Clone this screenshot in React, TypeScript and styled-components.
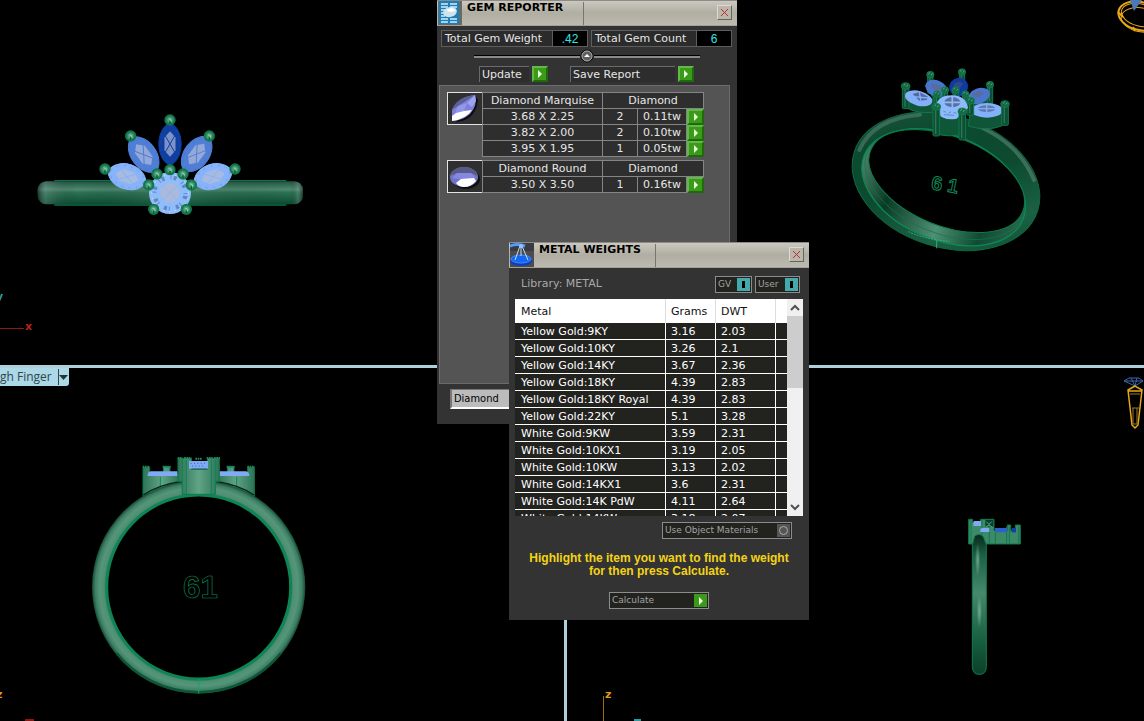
import React from "react";
import styled, { createGlobalStyle } from "styled-components";

const GlobalStyle = createGlobalStyle`
  * { box-sizing: border-box; }
  html, body, #root { height: 100%; }
  body {
    margin: 0;
    background: #000;
    overflow: hidden;
    font: 11px/15px "DejaVu Sans", Verdana, sans-serif;
    color: #e6e6e6;
  }
  button, select, input { font: inherit; margin: 0; }
`;

/* ---------- modelling viewports ---------- */

const Desktop = styled.main`
  position: relative;
  height: 100vh;
  overflow: hidden;
`;

const Viewports = styled.div`
  display: grid;
  height: 100%;
  grid-template-columns: 564fr 577fr;
  grid-template-rows: 365fr 353fr;
  gap: 3px;
  background: #add0dc;
`;

const Viewport = styled.section`
  position: relative;
  min-width: 0;
  min-height: 0;
  background: #000;
  overflow: hidden;
`;

const Scene = styled.svg`
  display: block;
  width: 100%;
  height: 100%;
`;

const ViewportTab = styled.button`
  position: absolute;
  top: 0;
  left: 0;
  display: flex;
  align-items: center;
  height: 18px;
  padding: 0;
  border: 0;
  border-radius: 0 0 3px 0;
  background: #add8e6;
  color: #2f4650;
  font: 12px/18px "Open Sans", "Noto Sans", sans-serif;
`;

const TabName = styled.span`
  width: 58px;
  text-align: left;
  white-space: nowrap;
`;

const TabArrow = styled.svg`
  width: 11px;
  height: 16px;
  border-left: 1px solid #2f4650;
`;

/* ---------- floating windows ---------- */

const Window = styled.section<{ $x: number; $y: number }>`
  position: absolute;
  left: ${(p) => p.$x}px;
  top: ${(p) => p.$y}px;
  width: 300px;
  background: #333;
`;

const TitleBar = styled.header`
  display: flex;
  height: 26px;
  padding: 1px 5px 1px 1px;
  border-top: 1px solid #8d8b85;
  border-bottom: 1px solid #a3a19b;
  background: linear-gradient(#cbc8bf 0, #b0ada2 12px, #bdbab0 24px);
`;

const TitleIcon = styled.svg`
  width: 24px;
  height: 24px;
  margin-top: -1px;
`;

const Title = styled.h1`
  width: 122px;
  height: 23px;
  margin: 0;
  padding-left: 5px;
  border-right: 1px solid #77756e;
  color: #000;
  font-size: 11px;
  line-height: 11px;
  font-weight: 700;
  white-space: nowrap;
`;

const CloseButton = styled.button`
  display: grid;
  place-items: center;
  width: 15px;
  height: 15px;
  margin: 3px 0 0 auto;
  padding: 0;
  border: 1px solid;
  border-color: #dcdad2 #66645e #66645e #dcdad2;
  background: #b9b6ac;
`;

const GreenButton = styled.button<{ $size?: number; $flat?: boolean }>`
  display: grid;
  place-items: center;
  width: ${(p) => p.$size ?? 17}px;
  height: ${(p) => p.$size ?? 16}px;
  padding: 0;
  border: ${(p) => (p.$flat ? 0 : 2)}px solid;
  border-color: #63b84a #1f6a0c #1f6a0c #63b84a;
  background: #3c9a1b;
`;

const Arrow = () => (
  <svg width="8" height="8" viewBox="0 0 8 8">
    <path d="M2 0 L6 4 L2 8 Z" fill="#e9ffd9" />
  </svg>
);

const Close = () => (
  <svg width="9" height="9" viewBox="0 0 9 9">
    <path d="M1 1 L8 8 M8 1 L1 8" stroke="#c22a2e" strokeWidth="1" />
  </svg>
);

/* ---------- gem reporter ---------- */

const Totals = styled.div`
  display: flex;
  gap: 3px;
  padding: 4px 4px 0;
`;

const Total = styled.div`
  display: flex;
  height: 17px;
  border: 1px solid #5d5d5d;
  background: #1f1f1f;
`;

const TotalLabel = styled.span<{ $w: number }>`
  width: ${(p) => p.$w}px;
  padding-left: 3px;
  white-space: nowrap;
  border-right: 1px solid #5d5d5d;
  background: #2b2b2b;
`;

const TotalValue = styled.output<{ $w: number }>`
  width: ${(p) => p.$w}px;
  background: #000;
  color: #35e0e6;
  text-align: center;
  font: 12px/16px "Liberation Sans", Arial, sans-serif;
`;

const Fold = styled.div`
  display: flex;
  align-items: center;
  height: 14px;
  margin: 2px 37px 0;
  &::before, &::after {
    content: "";
    flex: 1;
    height: 2px;
    border-top: 1px solid #000;
    background: #8a8a8a;
  }
`;

const FoldButton = styled.button`
  width: 14px;
  height: 14px;
  padding: 0;
  border: 0;
  background: none;
  svg { display: block; }
`;

const Actions = styled.div`
  display: flex;
  gap: 22px;
  padding: 3px 42px 0;
`;

const Action = styled.label<{ $w: number }>`
  display: flex;
  gap: 3px;
  > span {
    width: ${(p) => p.$w}px;
    height: 16px;
    padding-left: 2px;
    border-top: 1px solid #6a6a6a;
    border-left: 1px solid #6a6a6a;
    background: #2d2d2d;
  }
`;

const ReportPanel = styled.div`
  display: flex;
  flex-direction: column;
  gap: 3px;
  height: 299px;
  margin: 3px 7px 0 2px;
  padding: 6px 0 0 7px;
  border: 1px solid #6b6b6b;
  background: #545454;
`;

const GemGroup = styled.div`
  display: flex;
  align-items: flex-start;
`;

const GemPicture = styled.svg`
  width: 36px;
  height: 33px;
  border: 1px solid #e4e4e4;
  background: #2f2f2f;
`;

const GemTable = styled.table`
  width: 222px;
  table-layout: fixed;
  border-collapse: separate;
  border-spacing: 0;
  border-top: 1px solid #858585;
  margin-left: -1px;
  th, td {
    height: 16px;
    padding: 0;
    border-right: 1px solid #858585;
    border-bottom: 1px solid #858585;
    background: #2e2e2e;
    font-weight: 400;
    text-align: center;
    white-space: nowrap;
  }
  th:first-child, td:first-child { border-left: 1px solid #858585; }
  td:last-child { border: 0; }
`;

const MaterialBar = styled.div`
  padding: 5px 12px 15px 13px;
`;

const MaterialSelect = styled.select`
  display: block;
  width: 100%;
  height: 20px;
  padding: 0 2px;
  border: 1px solid;
  border-color: #777 #fff #fff #777;
  border-width: 1px 1px 2px 2px;
  border-radius: 0;
  appearance: none;
  background: #bcbcbc;
  color: #000;
  font: 11px/16px "DejaVu Sans Condensed", Tahoma, sans-serif;
`;

/* ---------- metal weights ---------- */

const Toolbar = styled.div`
  display: flex;
  gap: 3px;
  padding: 8px 9px 6px 12px;
`;

const Library = styled.span`
  flex: 1;
  color: #a8a8a8;
`;

const Toggle = styled.label<{ $w: number }>`
  display: flex;
  align-items: center;
  justify-content: space-between;
  width: ${(p) => p.$w}px;
  height: 17px;
  padding: 0 1px 0 2px;
  border: 1px solid #8c8c8c;
  background: #22221f;
  color: #a2a2a2;
  font-size: 9px;
  line-height: 17px;
  white-space: nowrap;
`;

const Tick = styled.input`
  display: grid;
  place-items: center;
  width: 13px;
  height: 13px;
  appearance: none;
  background: #555;
  &::before {
    content: "";
    width: 7px;
    height: 7px;
    border: 1px solid #aaa;
    border-radius: 50%;
  }
  &:checked { background: #43a9ab; }
  &:checked::before {
    width: 3px;
    height: 7px;
    border: 0;
    border-radius: 0;
    background: #000;
  }
`;

const MetalList = styled.div`
  display: flex;
  height: 217px;
  margin: 0 6px;
  overflow: hidden;
  background: #fff;
`;

const MetalRows = styled.div`
  flex: 1;
  overflow: hidden;
`;

const MetalTable = styled.table`
  width: 272px;
  table-layout: fixed;
  border-collapse: separate;
  border-spacing: 0;
  background: #22221f;
  color: #fff;
  th {
    height: 24px;
    padding: 0 0 0 5px;
    border-right: 1px solid #ddd;
    background: #fff;
    color: #111;
    font-weight: 400;
    text-align: left;
  }
  td {
    height: 17px;
    padding: 0 0 0 5px;
    border-right: 1px solid #fff;
    border-bottom: 1px solid #fff;
    white-space: nowrap;
  }
  th:first-child, td:first-child { padding-left: 6px; }
  th:last-child, td:last-child { border-right: 0; }
`;

const Scrollbar = styled.div`
  display: grid;
  grid-template-rows: 17px 72px 1fr 17px;
  justify-items: center;
  align-items: center;
  width: 16px;
  background: #f0f0f0;
`;

const Thumb = styled.div`
  align-self: stretch;
  justify-self: stretch;
  background: #cdcdcd;
`;

const Materials = styled.div`
  display: flex;
  justify-content: flex-end;
  padding: 6px 17px 0;
`;

const Hint = styled.p`
  margin: 13px 16px 14px;
  color: #f3d316;
  font: bold 12px/13px "Liberation Sans", Arial, sans-serif;
  text-align: center;
`;

const Calculate = styled.div`
  display: flex;
  justify-content: center;
  padding-bottom: 11px;
`;

/* ---------- data ---------- */

const gems = [
  {
    name: "Diamond Marquise",
    shape: "marquise",
    rows: [
      ["3.68 X 2.25", "2", "0.11tw"],
      ["3.82 X 2.00", "2", "0.10tw"],
      ["3.95 X 1.95", "1", "0.05tw"],
    ],
  },
  { name: "Diamond Round", shape: "round", rows: [["3.50 X 3.50", "1", "0.16tw"]] },
];

const metals = [
  ["Yellow Gold:9KY", "3.16", "2.03"],
  ["Yellow Gold:10KY", "3.26", "2.1"],
  ["Yellow Gold:14KY", "3.67", "2.36"],
  ["Yellow Gold:18KY", "4.39", "2.83"],
  ["Yellow Gold:18KY Royal", "4.39", "2.83"],
  ["Yellow Gold:22KY", "5.1", "3.28"],
  ["White Gold:9KW", "3.59", "2.31"],
  ["White Gold:10KX1", "3.19", "2.05"],
  ["White Gold:10KW", "3.13", "2.02"],
  ["White Gold:14KX1", "3.6", "2.31"],
  ["White Gold:14K PdW", "4.11", "2.64"],
  ["White Gold:14KW", "3.18", "2.07"],
];

/* ---------- drawings ---------- */

const axisFont = { fontFamily: "DejaVu Sans", fontSize: 11, fontWeight: 700 } as const;

type MarquiseProps = { x: number; y: number; l: number; w: number; r: number; fill: string; facet: string };

const Marquise = ({ x, y, l, w, r, fill, facet }: MarquiseProps) => (
  <g transform={`translate(${x} ${y}) rotate(${r})`}>
    <path
      d={`M${-l} 0 C${-l * 0.7} ${-w * 1.35} ${l * 0.7} ${-w * 1.35} ${l} 0 C${l * 0.7} ${w * 1.35} ${-l * 0.7} ${w * 1.35} ${-l} 0Z`}
      fill={fill}
      stroke={fill}
      strokeWidth="3"
      strokeLinejoin="round"
    />
    <ellipse rx={l * 0.85} ry={w * 0.85} fill="none" stroke="#3c5fa0" strokeWidth="1" strokeDasharray="8 14" opacity=".6" />
    <path d={`M${-l * 0.6} 0 L${-l * 0.3} ${-w * 0.5} H${l * 0.3} L${l * 0.6} 0 L${l * 0.3} ${w * 0.5} H${-l * 0.3}Z`} fill={facet} />
    <path
      d={`M${-l * 0.4} ${-w * 0.45} L${l * 0.4} ${w * 0.45} M${-l * 0.4} ${w * 0.45} L${l * 0.4} ${-w * 0.45}`}
      stroke={fill}
      strokeWidth="3"
    />
  </g>
);

const prongs = [
  [450, 60], [332, 108], [568, 108], [255, 207], [645, 207], [450, 209],
  [411, 222], [489, 222], [386, 255], [514, 255], [401, 328], [499, 328],
];

const TopView = () => (
  <Scene viewBox="0 0 564 365" preserveAspectRatio="xMidYMid slice" aria-hidden="true">
    <defs>
      <linearGradient id="band" x2="0" y2="1">
        <stop offset="0" stopColor="#24543f" />
        <stop offset=".35" stopColor="#4d8a72" />
        <stop offset=".5" stopColor="#2c6f52" />
        <stop offset=".75" stopColor="#1a5f42" />
        <stop offset="1" stopColor="#0d4a30" />
      </linearGradient>
      <linearGradient id="bandEnds">
        <stop offset="0" stopColor="#000" stopOpacity=".5" />
        <stop offset=".03" stopColor="#9aa" stopOpacity=".25" />
        <stop offset=".15" stopColor="#000" stopOpacity="0" />
        <stop offset=".5" stopColor="#5a9c83" stopOpacity=".25" />
        <stop offset=".95" stopColor="#000" stopOpacity="0" />
        <stop offset=".98" stopColor="#9aa" stopOpacity=".25" />
        <stop offset="1" stopColor="#000" stopOpacity=".5" />
      </linearGradient>
    </defs>
    <g transform="translate(20 100) scale(.33333)">
      <rect x="53" y="244" width="796" height="69" rx="26" fill="url(#band)" />
      <rect x="53" y="244" width="796" height="69" rx="26" fill="url(#bandEnds)" />
      <path d="M103 242 H799 M103 315 H799" stroke="#0a7048" strokeWidth="4" />
      <Marquise x={450} y={132} l={64} w={33} r={90} fill="#103fa3" facet="#7d92c6" />
      <Marquise x={371} y={164} l={64} w={37} r={54} fill="#4f7ed6" facet="#94a9d8" />
      <Marquise x={530} y={162} l={64} w={37} r={126} fill="#4f7ed6" facet="#94a9d8" />
      <Marquise x={321} y={230} l={60} w={37} r={17} fill="#86b3fa" facet="#a8badf" />
      <Marquise x={579} y={230} l={60} w={37} r={163} fill="#86b3fa" facet="#a8badf" />
      <circle cx="450" cy="279" r="63" fill="#8fbcfb" />
      <circle cx="450" cy="279" r="47" fill="none" stroke="#42669b" strokeWidth="13" strokeDasharray="3 6 9 19" opacity=".6" />
      <circle cx="450" cy="279" r="55" fill="none" stroke="#cfe2ff" strokeWidth="3" strokeDasharray="4 13" />
      <circle cx="450" cy="279" r="29" fill="#aab9dc" />
      <path d="M428 258 L472 300 M472 258 L428 300" stroke="#8fb2ee" strokeWidth="2" />
      {prongs.map(([x, y]) => (
        <g key={`${x}-${y}`} transform={`translate(${x} ${y})`}>
          <circle r="17" fill="#12774b" />
          <circle r="10" fill="#4f9e7c" stroke="#2a8a60" strokeWidth="3" />
          <path d="M-4 -3 Q5 -5 4 5" fill="none" stroke="#9fd0b8" strokeWidth="3" />
          <path d="M0 4 v8" stroke="#0b5a36" strokeWidth="4" />
        </g>
      ))}
    </g>
    <path d="M0 328.500 H24" stroke="#8e1712" />
    <text x="25" y="330" fill="#b9221c" {...axisFont}>x</text>
    <text x="-4" y="300" fill="#2b9da0" {...axisFont}>y</text>
  </Scene>
);

type PostProps = { x: number; y: number; h: number; w?: number };

const Post = ({ x, y, h, w = 20 }: PostProps) => (
  <g>
    <rect x={x - w / 2} y={y} width={w} height={h} rx="4" fill="#0f4f34" stroke="#0b7a4b" strokeWidth="3" />
    <path d={`M${x - 2} ${y + 14} V${y + h - 6}`} stroke="#2d7657" strokeWidth="4" />
    <ellipse cx={x} cy={y + 4} rx={w / 2 + 3} ry="10" fill="#146a45" stroke="#0d8a55" strokeWidth="2" />
    <path d={`M${x - 6} ${y + 2} l5 -4 M${x + 2} ${y + 5} l5 -4`} stroke="#63a888" strokeWidth="3" />
  </g>
);

const PerspectiveView = () => (
  <Scene viewBox="0 0 577 365" preserveAspectRatio="xMidYMid slice" aria-hidden="true">
    <defs>
      <linearGradient id="hoop" x1="0" y1="0" x2="1" y2="1">
        <stop offset="0" stopColor="#1d5a40" />
        <stop offset=".25" stopColor="#0d4a30" />
        <stop offset=".5" stopColor="#0c4b30" />
        <stop offset=".75" stopColor="#1b6144" />
        <stop offset="1" stopColor="#0a4a2d" />
      </linearGradient>
      <linearGradient id="hoopInner">
        <stop offset="0" stopColor="#4c806a" />
        <stop offset=".22" stopColor="#0a3a24" />
        <stop offset=".55" stopColor="#4f8f73" />
        <stop offset=".8" stopColor="#104a32" />
        <stop offset="1" stopColor="#2a654c" />
      </linearGradient>
    </defs>
    <g transform="translate(273 50) scale(.33333)">
      <ellipse cx="318" cy="394" rx="289" ry="197" transform="rotate(18 318 394)" fill="url(#hoop)" stroke="#0c6a42" strokeWidth="3" />
      <path d="M58 300 Q100 205 240 194" fill="none" stroke="#6d8e80" strokeWidth="12" strokeLinecap="round" opacity=".45" />
      <path d="M400 222 Q535 275 582 390" fill="none" stroke="#6d8e80" strokeWidth="12" strokeLinecap="round" opacity=".5" />
      <ellipse cx="311" cy="412" rx="257" ry="158" transform="rotate(22 311 412)" fill="url(#hoopInner)" stroke="#0b8a55" strokeWidth="4" />
      <ellipse cx="315" cy="403" rx="252" ry="147" transform="rotate(22 315 403)" fill="none" stroke="#0b7a4b" strokeWidth="2" />
      <ellipse cx="320" cy="393" rx="246" ry="134" transform="rotate(22 320 393)" fill="#000" stroke="#0b7a4b" strokeWidth="3" />
      <path d="M205 545 Q255 568 330 574" fill="none" stroke="#2fae7b" strokeWidth="3" strokeDasharray="6 3" />
      <path d="M290 570 V595" fill="none" stroke="#2fae7b" strokeWidth="3" />
      <g fill="#0f5537" stroke="#0b7a4b" strokeWidth="3">
        <path d="M200 135 L198 172 Q230 195 300 185 V150Z" />
        <path d="M392 180 L385 228 Q440 245 485 228 L490 180Z" />
        <path d="M255 105 Q300 150 400 150 L450 130 V155 L400 185 L290 160Z" />
      </g>
      <Post x={271} y={70} h={60} w={16} />
      <Post x={366} y={62} h={50} w={16} />
      <Post x={450} y={100} h={60} w={16} />
      <ellipse cx="289" cy="115" rx="34" ry="24" transform="rotate(22 289 115)" fill="#4a75cd" />
      <ellipse cx="356" cy="111" rx="29" ry="27" transform="rotate(-32 356 111)" fill="#0f3a9f" />
      <ellipse cx="417" cy="138" rx="34" ry="23" transform="rotate(-20 417 138)" fill="#4a75cd" />
      <path d="M272 100 l28 6 8 14 -16 5 -14 -10Z M396 132 l22 -10 14 6 -10 12 -18 2Z" fill="#596b9f" />
      <path d="M342 100 l18 -6 10 8 -12 14 -16 -2Z" fill="#30478a" />
      <Post x={197} y={104} h={72} />
      <ellipse cx="236" cy="145" rx="42" ry="22" transform="rotate(15 236 145)" fill="#82b1fa" />
      <path d="M218 132 l20 -6 26 14 -4 10 -22 2Z" fill="#53699d" />
      <path d="M238 126 l4 26 M220 140 l44 4" stroke="#82b1fa" strokeWidth="4" />
      <Post x={315} y={116} h={30} w={16} />
      <Post x={347} y={116} h={30} w={16} />
      <Post x={376} y={128} h={36} w={16} />
      <Post x={291} y={128} h={50} w={16} />
      <ellipse cx="441" cy="181" rx="48" ry="22" fill="#82b1fa" />
      <ellipse cx="440" cy="176" rx="26" ry="10" fill="#5f78ad" />
      <path d="M440 165 V188 M414 176 H466" stroke="#82b1fa" strokeWidth="4" />
      <Post x={495} y={158} h={68} />
      <Post x={391} y={148} h={48} />
      <path d="M293 185 L290 252 Q330 264 375 250 V190Z" fill="#0f5537" stroke="#0b7a4b" strokeWidth="3" />
      <path d="M288 170 Q292 136 335 136 Q378 136 384 174 L350 206 Q325 212 303 200Z" fill="#8cbafd" />
      <ellipse cx="337" cy="157" rx="24" ry="15" fill="#5a6f9f" />
      <path d="M337 140 V174 M312 157 H362" stroke="#8cbafd" strokeWidth="5" />
      <path d="M310 183 l8 4 M325 190 l8 -5 M340 188 l10 2 M312 194 l30 2" stroke="#6288c5" strokeWidth="3" />
      <Post x={289} y={166} h={92} w={20} />
      <Post x={367} y={180} h={90} w={20} />
      <g fill="none" stroke="#0d8a58" strokeWidth="3" fontFamily="Liberation Sans" fontSize="58" fontWeight="700">
        <text x="274" y="420" transform="rotate(8 290 405)">6</text>
        <text x="323" y="428" transform="rotate(12 340 410)">1</text>
      </g>
    </g>
    <g fill="none" stroke="#e9a718" strokeWidth="1">
      <ellipse cx="573" cy="16" rx="22" ry="14" transform="rotate(14 573 16)" strokeWidth="2" />
      <ellipse cx="573" cy="15" rx="19" ry="11" transform="rotate(14 573 15)" />
      <ellipse cx="575" cy="20" rx="21" ry="12" transform="rotate(10 575 20)" />
      <path d="M551 12 l5 5 M566 27 l2 4" strokeWidth="2" />
    </g>
    <path d="M563 0 L567 11 L575 0Z" fill="#4a78b8" />
  </Scene>
);

const FrontView = () => (
  <Scene viewBox="0 0 564 353" preserveAspectRatio="xMidYMid slice" aria-hidden="true">
    <defs>
      <radialGradient id="front">
        <stop offset=".86" stopColor="#2f7657" />
        <stop offset=".89" stopColor="#4f9075" />
        <stop offset=".93" stopColor="#559679" />
        <stop offset=".97" stopColor="#3d7f64" />
        <stop offset="1" stopColor="#154a34" />
      </radialGradient>
      <linearGradient id="head">
        <stop offset="0" stopColor="#2c7556" />
        <stop offset=".5" stopColor="#61a386" />
        <stop offset="1" stopColor="#2c7556" />
      </linearGradient>
    </defs>
    <g transform="translate(80 72) scale(.33333)">
      <g fill="url(#head)" stroke="#0b7a4b" strokeWidth="3">
        <path d="M189 82 H209 V105 H250 V80 H270 V100 H300 V180 H189Z" />
        <path d="M523 82 H503 V105 H462 V80 H442 V100 H412 V180 H523Z" />
      </g>
      <path d="M241 110 V160 M470 110 V160" stroke="#0b8a55" strokeWidth="3" />
      <path d="M203 108 Q203 95 212 94 H292 V108Z M417 108 V94 H498 Q508 96 508 108Z" fill="#7eabf3" />
      <circle cx="356" cy="441" r="320" fill="url(#front)" />
      <path d="M300 125 Q235 135 190 165 M412 125 Q477 135 522 165" fill="none" stroke="#072317" strokeWidth="4" />
      <path d="M110 640 A318 318 0 0 0 602 640" fill="none" stroke="#0d5636" strokeWidth="7" />
      <circle cx="356" cy="441" r="276" fill="#000" stroke="#0d8555" strokeWidth="9" />
      <path d="M356 716 V760" stroke="#0aa866" strokeWidth="3" />
      <path d="M294 55 H334 V88 H382 V55 H418 V124 H406 V163 H307 V124 H294Z" fill="url(#head)" stroke="#0b7a4b" strokeWidth="3" />
      <path d="M307 60 V163 M319 60 V163 M394 60 V163 M406 60 V163" stroke="#168057" strokeWidth="3" />
      <path d="M293 54 h14 M312 54 h22 M346 56 h20 M380 54 h18 M402 54 h18 M188 80 h22 M248 80 h24 M440 80 h24 M502 80 h22" stroke="#1b8a5c" strokeWidth="6" strokeDasharray="5 2" />
      <rect x="327" y="63" width="57" height="23" fill="#7eabf3" />
      <path d="M332 70 H380 M336 78 H376" stroke="#4169a5" strokeWidth="3" strokeDasharray="3 7" />
      <text x="309" y="473" fill="none" stroke="#0d8555" strokeWidth="2" fontFamily="Liberation Sans" fontSize="94" fontWeight="700">61</text>
    </g>
    <text x="-4" y="330" fill="#dd9a1c" {...axisFont}>z</text>
    <path d="M25 352 H34" stroke="#8e1712" strokeWidth="2" />
  </Scene>
);

const SideView = () => (
  <Scene viewBox="0 0 577 353" preserveAspectRatio="xMidYMid slice" aria-hidden="true">
    <defs>
      <linearGradient id="side" x2="0" y2="1">
        <stop offset="0" stopColor="#06291b" />
        <stop offset=".15" stopColor="#1c6145" />
        <stop offset=".42" stopColor="#458a6d" />
        <stop offset=".5" stopColor="#3a7d61" />
        <stop offset=".75" stopColor="#176040" />
        <stop offset="1" stopColor="#0c3f29" />
      </linearGradient>
      <radialGradient id="glint">
        <stop offset="0" stopColor="#8cc0a8" stopOpacity=".7" />
        <stop offset="1" stopColor="#8cc0a8" stopOpacity="0" />
      </radialGradient>
    </defs>
    <g transform="translate(373 132) scale(.33333)">
      <path d="M86 58 H98 V68 H122 V58 H162 V92 H202 V75 H212 V92 H226 V75 H241 V132 H86Z" fill="#3d8a69" stroke="#0b7a4b" strokeWidth="3" />
      <path d="M136 60 H160 V80 H136Z" fill="#0d3c29" />
      <path d="M93 60 V130 M126 60 V130 M148 75 V130 M166 95 V130 M200 80 V130 M208 80 V130 M236 80 V130" stroke="#127a50" strokeWidth="3" />
      <path d="M139 65 l8 8 8 -8 M138 80 l10 -5 10 8" fill="none" stroke="#4fb28b" strokeWidth="3" />
      <path d="M100 78 V66 Q100 63 105 63 H123 V78Z M121 96 V88 L126 84 H148 V96Z" fill="#7eabf3" />
      <path d="M163 84 H201 V97 H168Z" fill="#2c60cc" />
      <path d="M215 84 H228 V97 H215Z" fill="#123fa8" />
      <path d="M97 134 L104 108 Q118 98 130 110 L139 134 V500 Q138 524 118 523 Q98 524 97 500Z" fill="url(#side)" stroke="#127a50" strokeWidth="3" />
      <ellipse cx="113" cy="180" rx="8" ry="50" fill="url(#glint)" />
      <ellipse cx="118" cy="335" rx="8" ry="50" fill="url(#glint)" />
    </g>
    <text x="38" y="330" fill="#dd9a1c" {...axisFont}>z</text>
    <path d="M36.500 328 V353" stroke="#9a6a14" />
    <path d="M67 352 H74" stroke="#2b9da0" strokeWidth="2" />
    <g fill="none">
      <path d="M557 13 L562 10 H572 L576 13 L568 18Z M557 13 H576 M564 10 L568 18 L570 10" stroke="#3c68b0" strokeWidth="1" />
      <path d="M568 18 L561 22 L565 57 L568 60 L571 57 L575 22Z M561 23 H575" stroke="#e9a718" strokeWidth="1.500" />
      <path d="M563 26 H573 M565 40 H572 M566 40 V56 H570 V40" stroke="#9a7a28" />
    </g>
  </Scene>
);

const GemReporterIcon = () => (
  <TitleIcon viewBox="0 0 24 24">
    <rect width="24" height="24" fill="#6b6963" />
    <rect x="1" width="20" height="23" fill="#1c7fb8" />
    <path d="M3 3 H10 M12 3 H19 M3 6 H10 M12 6 H19 M3 9 H7 M3 12 H6 M3 15 H7 M3 18 H10 M12 18 H19 M3 21 H10 M12 21 H19" stroke="#d5eefb" strokeWidth="1.500" />
    <ellipse cx="12" cy="11" rx="7" ry="5" transform="rotate(-15 12 11)" fill="#cfe3ec" />
    <path d="M8 9 L14 7 L18 10 L12 11Z" fill="#fff" />
  </TitleIcon>
);

const MetalWeightsIcon = () => (
  <TitleIcon viewBox="0 0 24 24">
    <rect width="24" height="24" fill="#4c4c4f" />
    <rect width="24" height="8" fill="#3a3b42" />
    <ellipse cx="11" cy="18" rx="11" ry="5" fill="#0c3fc0" />
    <ellipse cx="11" cy="16" rx="10" ry="4" fill="#1567f0" stroke="#3f8bff" />
    <path d="M0 3 Q7 0 15 3" fill="none" stroke="#4f9dff" strokeWidth="3" />
    <path d="M10 3 L5 17 M12 3 L18 17 M11 3 V13" fill="none" stroke="#c4dcf7" strokeWidth="1" />
    <circle cx="11" cy="3" r="2" fill="#8fc4ff" />
  </TitleIcon>
);

const GemThumb = ({ shape }: { shape: string }) =>
  shape === "marquise" ? (
    <GemPicture viewBox="0 0 34 31">
      <path d="M8 29 Q28 27 30 7 L27 3Z" fill="#0d0d0d" />
      <path d="M4 28 L4 17 Q9 4 27 2 Q30 12 22 21 Q14 28 4 28Z" fill="#7f82dc" />
      <path d="M4 17 Q9 4 27 2 L21 6 L10 13Z" fill="#5b5f94" />
      <path d="M27 2 L19 10 L24 14 L28 8Z" fill="#9ea3ee" />
      <path d="M10 13 L19 10 L16 18 L7 20Z" fill="#9496ea" />
      <path d="M4 23 L8 20 L16 18 L24 17 Q18 26 4 28Z" fill="#fff" />
    </GemPicture>
  ) : (
    <GemPicture viewBox="0 0 34 31">
      <ellipse cx="18" cy="18" rx="14" ry="10" fill="#111" />
      <ellipse cx="16" cy="16" rx="14" ry="10" fill="#6f75c4" />
      <path d="M2 15 Q5 6 16 6 Q27 6 30 15 L23 12 L9 12Z" fill="#565b86" />
      <path d="M4 17 L9 12 H23 L28 17 L18 19Z" fill="#8587e2" />
      <path d="M8 22 L13 18 L26 17 L28 20 Q23 26 16 26 Q11 26 8 22Z" fill="#fff" />
    </GemPicture>
  );

/* ---------- page ---------- */

const GemReporter = () => (
  <Window $x={437} $y={0}>
    <TitleBar>
      <GemReporterIcon />
      <Title>GEM REPORTER</Title>
      <CloseButton aria-label="Close Gem Reporter"><Close /></CloseButton>
    </TitleBar>
    <Totals>
      <Total><TotalLabel $w={111}>Total Gem Weight</TotalLabel><TotalValue $w={34}>.42</TotalValue></Total>
      <Total><TotalLabel $w={105}>Total Gem Count</TotalLabel><TotalValue $w={34}>6</TotalValue></Total>
    </Totals>
    <Fold>
      <FoldButton aria-label="Collapse totals">
        <svg width="14" height="14" viewBox="0 0 14 14">
          <circle cx="7" cy="7" r="6" fill="#5f5f5f" stroke="#000" />
          <circle cx="7" cy="7" r="5" fill="none" stroke="#aaa" />
          <path d="M4 8 L7 5 L10 8Z" fill="#fff" />
        </svg>
      </FoldButton>
    </Fold>
    <Actions>
      <Action $w={50}><span>Update</span><GreenButton $size={16}><Arrow /></GreenButton></Action>
      <Action $w={105}><span>Save Report</span><GreenButton $size={16}><Arrow /></GreenButton></Action>
    </Actions>
    <ReportPanel>
      {gems.map((gem) => (
        <GemGroup key={gem.name}>
          <GemThumb shape={gem.shape} />
          <GemTable>
            <colgroup>
              <col width="121" /><col width="35" /><col width="49" /><col width="17" />
            </colgroup>
            <thead>
              <tr><th>{gem.name}</th><th colSpan={3}>Diamond</th></tr>
            </thead>
            <tbody>
              {gem.rows.map(([size, count, weight]) => (
                <tr key={size}>
                  <td>{size}</td>
                  <td>{count}</td>
                  <td>{weight}</td>
                  <td><GreenButton aria-label={`Select ${size}`}><Arrow /></GreenButton></td>
                </tr>
              ))}
            </tbody>
          </GemTable>
        </GemGroup>
      ))}
    </ReportPanel>
    <MaterialBar>
      <MaterialSelect aria-label="Gem material"><option>Diamond</option></MaterialSelect>
    </MaterialBar>
  </Window>
);

const MetalWeights = () => (
  <Window $x={509} $y={242}>
    <TitleBar>
      <MetalWeightsIcon />
      <Title>METAL WEIGHTS</Title>
      <CloseButton aria-label="Close Metal Weights"><Close /></CloseButton>
    </TitleBar>
    <Toolbar>
      <Library>Library: METAL</Library>
      <Toggle $w={37}>GV<Tick type="checkbox" defaultChecked /></Toggle>
      <Toggle $w={45}>User<Tick type="checkbox" defaultChecked /></Toggle>
    </Toolbar>
    <MetalList>
      <MetalRows>
        <MetalTable>
          <colgroup>
            <col width="151" /><col width="50" /><col width="60" /><col width="11" />
          </colgroup>
          <thead>
            <tr><th>Metal</th><th>Grams</th><th>DWT</th><th /></tr>
          </thead>
          <tbody>
            {metals.map(([name, grams, dwt]) => (
              <tr key={name}><td>{name}</td><td>{grams}</td><td>{dwt}</td><td /></tr>
            ))}
          </tbody>
        </MetalTable>
      </MetalRows>
      <Scrollbar>
        <svg width="10" height="7" viewBox="0 0 10 7"><path d="M1 6 L5 2 L9 6" fill="none" stroke="#505050" strokeWidth="2" /></svg>
        <Thumb />
        <span />
        <svg width="10" height="7" viewBox="0 0 10 7"><path d="M1 1 L5 5 L9 1" fill="none" stroke="#505050" strokeWidth="2" /></svg>
      </Scrollbar>
    </MetalList>
    <Materials>
      <Toggle $w={130}>Use Object Materials<Tick type="checkbox" /></Toggle>
    </Materials>
    <Hint>Highlight the item you want to find the weight for then press Calculate.</Hint>
    <Calculate>
      <Toggle $w={100}>Calculate<GreenButton $size={13} $flat><Arrow /></GreenButton></Toggle>
    </Calculate>
  </Window>
);

export default function App() {
  return (
    <>
      <GlobalStyle />
      <Desktop>
        <Viewports>
          <Viewport><TopView /></Viewport>
          <Viewport><PerspectiveView /></Viewport>
          <Viewport>
            <FrontView />
            <ViewportTab>
              <TabName>gh Finger</TabName>
              <TabArrow viewBox="0 0 10 16"><path d="M0 6 H9 L4.500 11Z" fill="#20343c" /></TabArrow>
            </ViewportTab>
          </Viewport>
          <Viewport><SideView /></Viewport>
        </Viewports>
        <GemReporter />
        <MetalWeights />
      </Desktop>
    </>
  );
}
